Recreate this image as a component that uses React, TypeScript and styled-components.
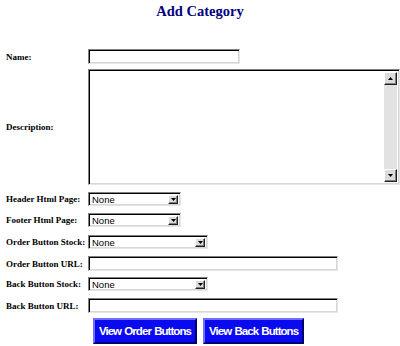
import React from "react";
import styled, { createGlobalStyle } from "styled-components";

const Global = createGlobalStyle`
  html, body { margin: 0; padding: 0; background: #ffffff; }
  body { width: 400px; height: 346px; overflow: hidden; font-family: "Liberation Serif", "Times New Roman", serif; }
`;

const Page = styled.div`
  width: 400px;
  height: 346px;
  display: flex;
  flex-direction: column;
  box-sizing: border-box;
`;

const Title = styled.h1`
  margin: 0;
  padding-top: 3px;
  height: 49px;
  box-sizing: border-box;
  text-align: center;
  font-family: "Liberation Serif", "Times New Roman", serif;
  font-weight: bold;
  font-size: 14.5px;
  line-height: 17px;
  color: #000080;
`;

const Form = styled.div`
  display: flex;
  flex-direction: column;
  padding-left: 6px;
`;

const Row = styled.div<{ $gap: number }>`
  display: grid;
  grid-template-columns: 82px 1fr;
  align-items: center;
  margin-top: ${(p) => p.$gap}px;
`;

const Label = styled.label`
  font-family: "Liberation Serif", "Times New Roman", serif;
  font-weight: bold;
  font-size: 9px;
  color: #000;
  white-space: nowrap;
`;

const sunken = `
  box-sizing: border-box;
  border: 1px solid;
  border-color: #808080 #e6e6e6 #e6e6e6 #808080;
  box-shadow: inset 1px 1px 0 #000, inset -1px -1px 0 #d6d6d6;
  background: #fff;
`;

const TextInput = styled.input<{ $w: number }>`
  ${sunken}
  width: ${(p) => p.$w}px;
  height: 15px;
  padding: 0 3px;
  margin: 0;
  outline: none;
  font-family: "Liberation Sans", Arial, sans-serif;
  font-size: 10px;
`;

const AreaBox = styled.div`
  ${sunken}
  width: 312px;
  height: 116px;
  display: flex;
  padding: 2px 2px 2px 2px;
`;

const Area = styled.textarea`
  flex: 1;
  border: none;
  outline: none;
  resize: none;
  overflow: hidden;
  margin: 0;
  padding: 1px 3px;
  font-family: "Liberation Sans", Arial, sans-serif;
  font-size: 10px;
  background: transparent;
`;

const ScrollBar = styled.div`
  width: 13px;
  display: flex;
  flex-direction: column;
  justify-content: space-between;
  background: #e2e2e2;
`;

const bevelBtn = `
  box-sizing: border-box;
  background: #dcdcdc;
  border: 1px solid;
  border-color: #ffffff #202020 #202020 #ffffff;
  box-shadow: inset -1px -1px 0 #808080;
  display: flex;
  align-items: center;
  justify-content: center;
`;

const ScrollButton = styled.div`
  ${bevelBtn}
  width: 13px;
  height: 13px;
`;

const SelectBox = styled.div<{ $w: number }>`
  ${sunken}
  width: ${(p) => p.$w}px;
  height: 14px;
  display: flex;
  align-items: stretch;
  padding: 2px 2px 1px 2px;
`;

const SelectValue = styled.span`
  flex: 1;
  font-family: "Liberation Sans", Arial, sans-serif;
  font-size: 9.5px;
  line-height: 10px;
  color: #000;
  padding-left: 1px;
`;

const DropButton = styled.span`
  ${bevelBtn}
  width: 10px;
`;

const ButtonRow = styled.div`
  display: flex;
  justify-content: center;
  gap: 6px;
  margin-top: 5px;
  padding-right: 3px;
`;

const BlueButton = styled.button`
  height: 26px;
  padding: 0 4px;
  margin: 0;
  box-sizing: border-box;
  background: #0a0af0;
  border: 2px solid;
  border-color: #7070ff #000070 #000070 #7070ff;
  color: #fff;
  font-family: "Liberation Sans", Arial, sans-serif;
  font-weight: bold;
  font-size: 11.5px;
  letter-spacing: -0.95px;
  word-spacing: 1px;
  cursor: pointer;
`;

const Tri = ({ up }: { up?: boolean }) => (
  <svg width="5" height="3" viewBox="0 0 5 3">
    <path d={up ? "M2.5 0 L5 3 L0 3 Z" : "M0 0 L5 0 L2.5 3 Z"} fill="#000" />
  </svg>
);

const Select = ({ w }: { w: number }) => (
  <SelectBox $w={w}>
    <SelectValue>None</SelectValue>
    <DropButton>
      <Tri />
    </DropButton>
  </SelectBox>
);

export default function App() {
  return (
    <>
      <Global />
      <Page>
        <Title>Add Category</Title>
        <Form>
          <Row $gap={0}>
            <Label>Name:</Label>
            <TextInput $w={152} />
          </Row>
          <Row $gap={5}>
            <Label>Description:</Label>
            <AreaBox>
              <Area />
              <ScrollBar>
                <ScrollButton>
                  <Tri up />
                </ScrollButton>
                <ScrollButton>
                  <Tri />
                </ScrollButton>
              </ScrollBar>
            </AreaBox>
          </Row>
          <Row $gap={7}>
            <Label>Header Html Page:</Label>
            <Select w={93} />
          </Row>
          <Row $gap={7}>
            <Label>Footer Html Page:</Label>
            <Select w={93} />
          </Row>
          <Row $gap={8}>
            <Label>Order Button Stock:</Label>
            <Select w={120} />
          </Row>
          <Row $gap={7}>
            <Label>Order Button URL:</Label>
            <TextInput $w={250} />
          </Row>
          <Row $gap={6}>
            <Label>Back Button Stock:</Label>
            <Select w={120} />
          </Row>
          <Row $gap={7}>
            <Label>Back Button URL:</Label>
            <TextInput $w={250} />
          </Row>
        </Form>
        <ButtonRow>
          <BlueButton>View Order Buttons</BlueButton>
          <BlueButton>View Back Buttons</BlueButton>
        </ButtonRow>
      </Page>
    </>
  );
}
